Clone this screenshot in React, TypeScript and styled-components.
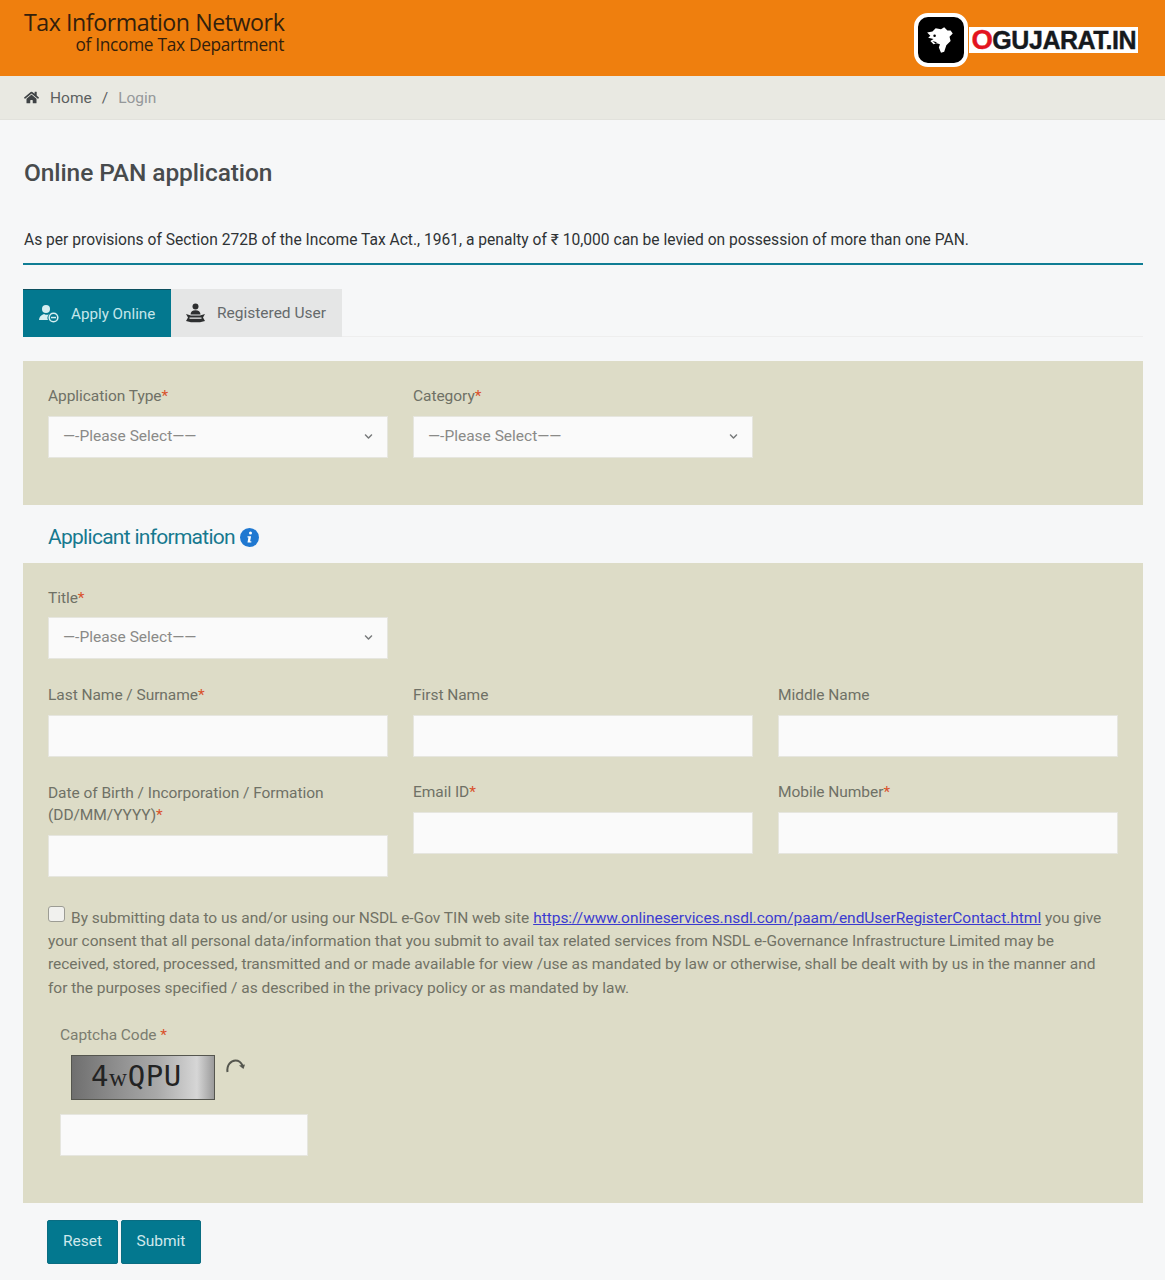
import styled, { createGlobalStyle } from 'styled-components'
import { FaHome, FaChevronDown } from 'react-icons/fa'

const GlobalStyle = createGlobalStyle`
  html, body {
    margin: 0;
    padding: 0;
    background: #f6f7f8;
    font-family: Roboto, 'Liberation Sans', sans-serif;
  }
  * { box-sizing: border-box; }
`

const Page = styled.div`
  width: 1165px;
  height: 1280px;
  overflow: hidden;
  background: #f6f7f8;
`

const Header = styled.header`
  height: 76px;
  background: #ef7f0e;
  display: flex;
  justify-content: space-between;
  padding: 10px 27px 0 24px;
`

const Brand = styled.div`
  width: 260px;
  font-family: 'Open Sans', sans-serif;
  color: #33200c;
  text-align: right;
`

const BrandTop = styled.div`
  font-size: 23.2px;
  line-height: 24px;
  letter-spacing: -0.45px;
  white-space: nowrap;
`

const BrandSub = styled.div`
  font-size: 17.3px;
  line-height: 21px;
  letter-spacing: -0.3px;
  white-space: nowrap;
`

const Logo = styled.div`
  display: flex;
  align-items: center;
  margin-top: 3px;
  height: 54px;
`

const LogoIcon = styled.div`
  width: 54px;
  height: 54px;
  background: #000;
  border: 4px solid #fff;
  border-radius: 14px;
  display: flex;
  align-items: center;
  justify-content: center;
`

const LogoText = styled.div`
  background: #fff;
  height: 26px;
  margin-left: 1px;
  padding: 0 2px;
  font-family: 'Liberation Sans', sans-serif;
  font-weight: 700;
  font-size: 25px;
  line-height: 26px;
  letter-spacing: -0.45px;
  color: #15191d;
  white-space: nowrap;
  -webkit-text-stroke: 0.4px #15191d;

  span {
    color: #e3141f;
    font-size: 27.5px;
    -webkit-text-stroke: 0.4px #e3141f;
  }
`

const Breadcrumb = styled.nav`
  height: 44px;
  background: #e9e9e2;
  border-bottom: 1px solid #e2e2dc;
  display: flex;
  align-items: center;
  padding: 0 24px;
  font-size: 15.5px;
  color: #5c5f60;

  svg { color: #3f4345; font-size: 15px; margin-right: 11px; }
`

const Crumb = styled.span<{ $muted?: boolean }>`
  color: ${(p) => (p.$muted ? '#95989a' : '#5c5f60')};
`

const Slash = styled.span`
  margin: 0 10px;
`

const Main = styled.main`
  padding: 0 22px 0 23px;
`

const Title = styled.h1`
  margin: 38px 0 0 1px;
  font-size: 24.5px;
  line-height: 30px;
  font-weight: 500;
  color: #484b4d;
  letter-spacing: -0.1px;
`

const Notice = styled.p`
  margin: 41px 0 0;
  padding: 0 0 12px 1px;
  font-size: 15.6px;
  line-height: 22px;
  color: #2f3335;
  border-bottom: 2px solid #0f7d94;
  white-space: nowrap;
`

const Tabs = styled.div`
  display: flex;
  margin-top: 24px;
  height: 48px;
  border-bottom: 1px solid #eeeeee;
`

const Tab = styled.div<{ $active?: boolean }>`
  display: flex;
  align-items: center;
  gap: 11px;
  width: ${(p) => (p.$active ? '148px' : '171px')};
  padding-left: ${(p) => (p.$active ? '15px' : '14px')};
  height: 48px;
  font-size: ${(p) => (p.$active ? '15.2px' : '15.5px')};
  background: ${(p) => (p.$active ? '#03788f' : '#e5e6e6')};
  color: ${(p) => (p.$active ? '#c5e6ea' : '#666a6c')};
  border-top: ${(p) => (p.$active ? '1px solid #0c4f5f' : 'none')};
`

const Panel = styled.section<{ $pad: string }>`
  background: #dddcc7;
  padding: ${(p) => p.$pad};
`

const TypePanel = styled(Panel)`
  margin-top: 24px;
  height: 144px;
`

const InfoPanel = styled(Panel)`
  height: 640px;
`

const Row = styled.div<{ $mt?: number }>`
  display: grid;
  grid-template-columns: 340px 340px 340px;
  column-gap: 25px;
  margin-top: ${(p) => p.$mt ?? 0}px;
`

const Field = styled.div``

const Label = styled.label<{ $tight?: boolean }>`
  display: block;
  font-size: 15.5px;
  line-height: 21px;
  color: #6f7166;
  margin-bottom: ${(p) => (p.$tight ? 8 : 9)}px;
  letter-spacing: -0.05px;

  b { color: #d9512c; font-weight: 400; }
`

const WrappedLabel = styled(Label)`
  line-height: 22px;
`

const Control = styled.div<{ $width?: number }>`
  height: 42px;
  width: ${(p) => (p.$width ? `${p.$width}px` : '100%')};
  background: #fafafa;
  border: 1px solid #e6e6df;
  display: flex;
  align-items: center;
  justify-content: space-between;
  padding: 0 14px 2px;
  font-size: 15.5px;
  color: #8a8a88;

  svg { font-size: 9px; color: #77797a; margin-right: 0; }
`

const SectionHead = styled.h2`
  display: flex;
  align-items: center;
  gap: 5px;
  margin: 0;
  height: 58px;
  padding: 6px 0 0 25px;
  font-size: 21px;
  font-weight: 400;
  color: #16798f;
  letter-spacing: -0.72px;
`

const Consent = styled.p`
  margin: 29px 0 0;
  font-size: 15.5px;
  line-height: 23.2px;
  color: #717265;
  letter-spacing: -0.03px;
  width: 1060px;

  a { color: #3b3bd0; text-decoration: underline; }
`

const CheckBox = styled.span`
  display: inline-block;
  width: 17px;
  height: 16px;
  background: #f1f1ee;
  border: 1px solid #9c9c94;
  border-radius: 3px;
  margin-right: 6px;
  vertical-align: 1px;
`

const CaptchaBox = styled.div`
  margin: 25px 0 0 12px;
`

const CaptchaLabel = styled(Label)`
  color: #7b7d70;
`

const CaptchaRow = styled.div`
  display: flex;
  align-items: flex-start;
  gap: 10px;
  margin-left: 11px;
`

const CaptchaImage = styled.div`
  width: 144px;
  height: 45px;
  background: linear-gradient(90deg, #6f6f6f 0%, #8d8d8d 30%, #a9a9a9 60%, #d6d6d6 88%, #9b9b9b 100%);
  border: 1px solid #55564f;
  font-family: 'DejaVu Sans Mono', monospace;
  font-size: 29px;
  line-height: 41px;
  color: #232323;
  padding-left: 19px;
  letter-spacing: 0.6px;
  white-space: nowrap;

  small {
    font-family: 'Liberation Serif', serif;
    font-size: 25px;
  }
`

const Reload = styled.svg`
  margin-top: 2px;
`

const CaptchaInput = styled(Control)`
  margin-top: 14px;
`

const Actions = styled.div`
  display: flex;
  gap: 3px;
  margin: 17px 0 0 24px;
`

const Button = styled.button<{ $width: number }>`
  width: ${(p) => p.$width}px;
  height: 44px;
  background: #03788f;
  color: #cfe8ec;
  border: 1px solid #0a6d82;
  border-radius: 2px;
  font-family: inherit;
  font-size: 15.5px;
  padding: 0 0 2px;
`

const ApplyIcon = () => (
  <svg width="22" height="20" viewBox="0 0 22 20" fill="#d6eef1">
    <circle cx="8" cy="5" r="4" />
    <path d="M1 16c0-3 2-5 5-6 2 1 3 1 5 .5-1.800 1.500-2 4-1 5.500z" />
    <circle cx="15.500" cy="13.500" r="4.300" fill="#03788f" stroke="#d6eef1" strokeWidth="1.600" />
    <rect x="13" y="12.800" width="5" height="1.500" fill="#d6eef1" />
  </svg>
)

const RegisteredIcon = () => (
  <svg width="21" height="20" viewBox="0 0 21 20" fill="#2d2f30">
    <circle cx="10.500" cy="3.500" r="3" />
    <path d="M5.500 11.500c0-2.800 2-4.300 5-4.300s5 1.500 5 4.300z" />
    <path d="M1 11l5 1.500h9l5-1.500-2 3.500 2 3.500-5 1.200h-9l-5-1.200 2-3.500z" />
    <rect x="4.500" y="14.500" width="12" height="1.300" fill="#e5e6e6" />
  </svg>
)

const MapLogo = () => (
  <svg width="32" height="30" viewBox="0 0 30 28" fill="#fff">
    <path d="M2 7l5-1 3-3 5 1 3-2 3 3 3 0 2 3-3 3 1 4-4 4-2 6-3 1-2-5 1-3-3-1-3 1-3-3 3-2-5-1 2-2z" />
    <circle cx="9" cy="10" r="1.200" fill="#000" />
    <path d="M7 15l4 1-1 1.400z" fill="#000" />
  </svg>
)

const InfoIcon = () => (
  <svg width="19" height="19" viewBox="0 0 19 19">
    <circle cx="9.500" cy="9.500" r="9.500" fill="#1f78d1" />
    <circle cx="10.500" cy="5" r="1.500" fill="#fff" />
    <path d="M7.500 8.200h3.600l-1 5h1.200v1.300H7.500l.9-5H7.500z" fill="#fff" />
  </svg>
)

const Select = ({ width }: { width?: number }) => (
  <Control $width={width}>
    —-Please Select——
    <FaChevronDown />
  </Control>
)

export default function App() {
  return (
    <Page>
      <GlobalStyle />
      <Header>
        <Brand>
          <BrandTop>Tax Information Network</BrandTop>
          <BrandSub>of Income Tax Department</BrandSub>
        </Brand>
        <Logo>
          <LogoIcon>
            <MapLogo />
          </LogoIcon>
          <LogoText>
            <span>O</span>GUJARAT.IN
          </LogoText>
        </Logo>
      </Header>
      <Breadcrumb>
        <FaHome />
        <Crumb>Home</Crumb>
        <Slash>/</Slash>
        <Crumb $muted>Login</Crumb>
      </Breadcrumb>
      <Main>
        <Title>Online PAN application</Title>
        <Notice>
          As per provisions of Section 272B of the Income Tax Act., 1961, a penalty of ₹ 10,000 can be levied on
          possession of more than one PAN.
        </Notice>
        <Tabs>
          <Tab $active>
            <ApplyIcon />
            Apply Online
          </Tab>
          <Tab>
            <RegisteredIcon />
            Registered User
          </Tab>
        </Tabs>
        <TypePanel $pad="25px 25px">
          <Row>
            <Field>
              <Label>
                Application Type<b>*</b>
              </Label>
              <Select />
            </Field>
            <Field>
              <Label>
                Category<b>*</b>
              </Label>
              <Select />
            </Field>
          </Row>
        </TypePanel>
        <SectionHead>
          Applicant information <InfoIcon />
        </SectionHead>
        <InfoPanel $pad="25px 25px">
          <Field>
            <Label $tight>
              Title<b>*</b>
            </Label>
            <Select width={340} />
          </Field>
          <Row $mt={26}>
            <Field>
              <Label>
                Last Name / Surname<b>*</b>
              </Label>
              <Control />
            </Field>
            <Field>
              <Label>First Name</Label>
              <Control />
            </Field>
            <Field>
              <Label>Middle Name</Label>
              <Control />
            </Field>
          </Row>
          <Row $mt={25}>
            <Field>
              <WrappedLabel>
                Date of Birth / Incorporation / Formation
                <br />
                (DD/MM/YYYY)<b>*</b>
              </WrappedLabel>
              <Control />
            </Field>
            <Field>
              <Label>
                Email ID<b>*</b>
              </Label>
              <Control />
            </Field>
            <Field>
              <Label>
                Mobile Number<b>*</b>
              </Label>
              <Control />
            </Field>
          </Row>
          <Consent>
            <CheckBox />
            By submitting data to us and/or using our NSDL e-Gov TIN web site{' '}
            <a href="#consent">https://www.onlineservices.nsdl.com/paam/endUserRegisterContact.html</a> you give your
            consent that all personal data/information that you submit to avail tax related services from NSDL
            e-Governance Infrastructure Limited may be received, stored, processed, transmitted and or made available
            for view /use as mandated by law or otherwise, shall be dealt with by us in the manner and for the purposes
            specified / as described in the privacy policy or as mandated by law.
          </Consent>
          <CaptchaBox>
            <CaptchaLabel>
              Captcha Code <b>*</b>
            </CaptchaLabel>
            <CaptchaRow>
              <CaptchaImage>
                4<small>w</small>QPU
              </CaptchaImage>
              <Reload width="21" height="20" viewBox="0 0 21 20" fill="none">
                <path d="M2.500 15C1.500 8 6 3.500 10.500 3.500c3 0 5.500 1.700 7 5" stroke="#55574f" strokeWidth="2" />
                <path d="M14 8.500l6-1-1.500 4.500z" fill="#55574f" />
              </Reload>
            </CaptchaRow>
            <CaptchaInput $width={248} />
          </CaptchaBox>
        </InfoPanel>
        <Actions>
          <Button $width={71}>Reset</Button>
          <Button $width={80}>Submit</Button>
        </Actions>
      </Main>
    </Page>
  )
}
